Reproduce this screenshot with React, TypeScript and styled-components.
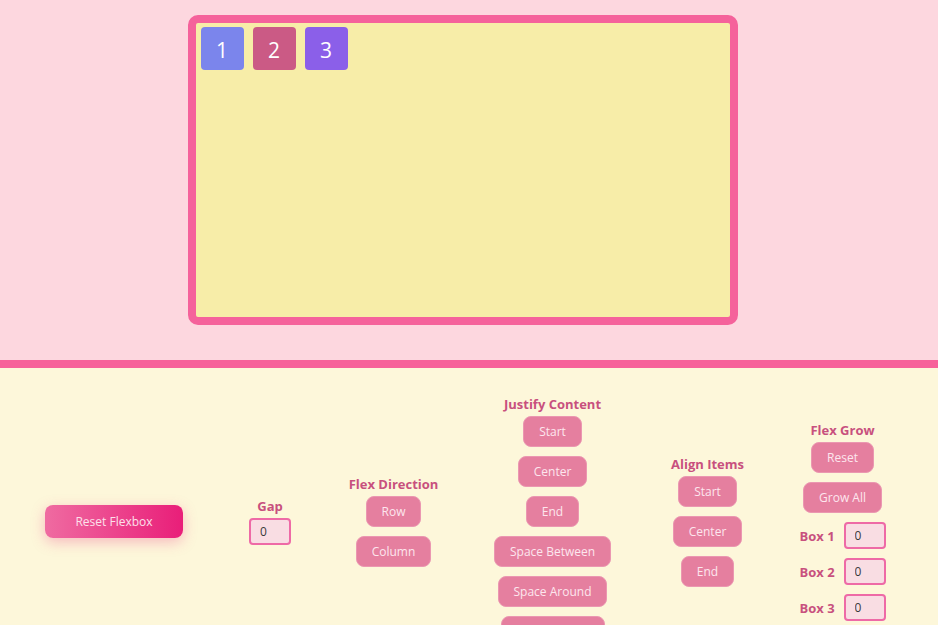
import React, { useState } from "react";
import styled, { createGlobalStyle } from "styled-components";

const GlobalStyle = createGlobalStyle`
  html, body { margin: 0; padding: 0; }
  body {
    font-family: "Open Sans", "Noto Sans", sans-serif;
    background: #fdf7da;
  }
  * { box-sizing: border-box; }
  input[type=number]::-webkit-inner-spin-button,
  input[type=number]::-webkit-outer-spin-button { -webkit-appearance: none; margin: 0; }
  input[type=number] { -moz-appearance: textfield; }
`;

const Stage = styled.section`
  height: 368px;
  background: #fdd7df;
  border-bottom: 8px solid #f7619a;
  padding: 15px 0 0 188px;
`;

const FlexContainer = styled.div`
  width: 550px;
  height: 310px;
  border: 8px solid #f5629b;
  border-radius: 10px;
  background: #f7eda8;
  display: flex;
  flex-direction: row;
  align-items: flex-start;
  justify-content: flex-start;
`;

const Item = styled.div<{ $bg: string }>`
  width: 43px;
  height: 43px;
  margin: 4px 4.5px;
  border-radius: 4px;
  background: ${(p) => p.$bg};
  color: #ffffff;
  font-size: 21px;
  font-weight: 400;
  display: flex;
  align-items: center;
  justify-content: center;
  padding-top: 2px;
`;

const Panel = styled.section`
  height: 306px;
  background: #fdf7da;
  display: flex;
  align-items: center;
  padding: 0 0 0 45px;
`;

const Slot = styled.div<{ $w: number; $ml: number }>`
  width: ${(p) => p.$w}px;
  margin-left: ${(p) => p.$ml}px;
  flex: none;
  display: flex;
  flex-direction: column;
  align-items: center;
`;

const ResetButton = styled.button`
  border: none;
  border-radius: 8px;
  padding: 8px 30px;
  font-family: inherit;
  font-size: 12px;
  line-height: 17px;
  color: #fde0ea;
  white-space: nowrap;
  background: linear-gradient(90deg, #ef6ba1 0%, #e91e79 100%);
  box-shadow: 0 4px 14px rgba(236, 72, 140, 0.35);
  cursor: pointer;
`;

const Label = styled.div`
  font-size: 13px;
  font-weight: 700;
  line-height: 18px;
  color: #c8507e;
  margin-bottom: 3px;
  white-space: nowrap;
`;

const Stack = styled.div`
  display: flex;
  flex-direction: column;
  align-items: center;
  gap: 9px;
`;

const OptionButton = styled.button`
  border: 1px solid #eb97b1;
  border-radius: 8px;
  background: #e57f9f;
  color: #fde6ee;
  font-family: inherit;
  font-size: 12px;
  line-height: 17px;
  padding: 6px 15px;
  white-space: nowrap;
  cursor: pointer;
`;

const NumberInput = styled.input`
  width: 42px;
  height: 27px;
  border: 2px solid #ee6aa6;
  border-radius: 4px;
  background: #f9dde3;
  padding: 0 0 0 9px;
  font-family: inherit;
  font-size: 12px;
  color: #3a3a3a;
  outline: none;
`;

const BoxRow = styled.div`
  display: flex;
  align-items: center;
  gap: 9px;
`;

const BoxLabel = styled.span`
  font-size: 13px;
  font-weight: 700;
  color: #c8507e;
  white-space: nowrap;
`;

const items = [
  { n: 1, bg: "#7b85ec" },
  { n: 2, bg: "#cb5a85" },
  { n: 3, bg: "#8b5fe9" },
];

export default function App() {
  const [gap, setGap] = useState("0");
  const [grow, setGrow] = useState(["0", "0", "0"]);

  return (
    <>
      <GlobalStyle />
      <Stage>
        <FlexContainer>
          {items.map((it) => (
            <Item key={it.n} $bg={it.bg}>
              {it.n}
            </Item>
          ))}
        </FlexContainer>
      </Stage>
      <Panel>
        <Slot $w={138} $ml={0}>
          <ResetButton>Reset Flexbox</ResetButton>
        </Slot>

        <Slot $w={42} $ml={66}>
          <Label>Gap</Label>
          <NumberInput
            type="number"
            value={gap}
            onChange={(e) => setGap(e.target.value)}
          />
        </Slot>

        <Slot $w={89} $ml={58}>
          <Label>Flex Direction</Label>
          <Stack>
            <OptionButton>Row</OptionButton>
            <OptionButton>Column</OptionButton>
          </Stack>
        </Slot>

        <Slot $w={115} $ml={57}>
          <Label>Justify Content</Label>
          <Stack>
            <OptionButton>Start</OptionButton>
            <OptionButton>Center</OptionButton>
            <OptionButton>End</OptionButton>
            <OptionButton>Space Between</OptionButton>
            <OptionButton>Space Around</OptionButton>
            <OptionButton>Space Evenly</OptionButton>
          </Stack>
        </Slot>

        <Slot $w={73} $ml={61}>
          <Label>Align Items</Label>
          <Stack>
            <OptionButton>Start</OptionButton>
            <OptionButton>Center</OptionButton>
            <OptionButton>End</OptionButton>
          </Stack>
        </Slot>

        <Slot $w={85} $ml={56}>
          <Label>Flex Grow</Label>
          <Stack>
            <OptionButton>Reset</OptionButton>
            <OptionButton>Grow All</OptionButton>
            {grow.map((g, i) => (
              <BoxRow key={i}>
                <BoxLabel>Box {i + 1}</BoxLabel>
                <NumberInput
                  type="number"
                  value={g}
                  onChange={(e) => {
                    const next = [...grow];
                    next[i] = e.target.value;
                    setGrow(next);
                  }}
                />
              </BoxRow>
            ))}
          </Stack>
        </Slot>
      </Panel>
    </>
  );
}
